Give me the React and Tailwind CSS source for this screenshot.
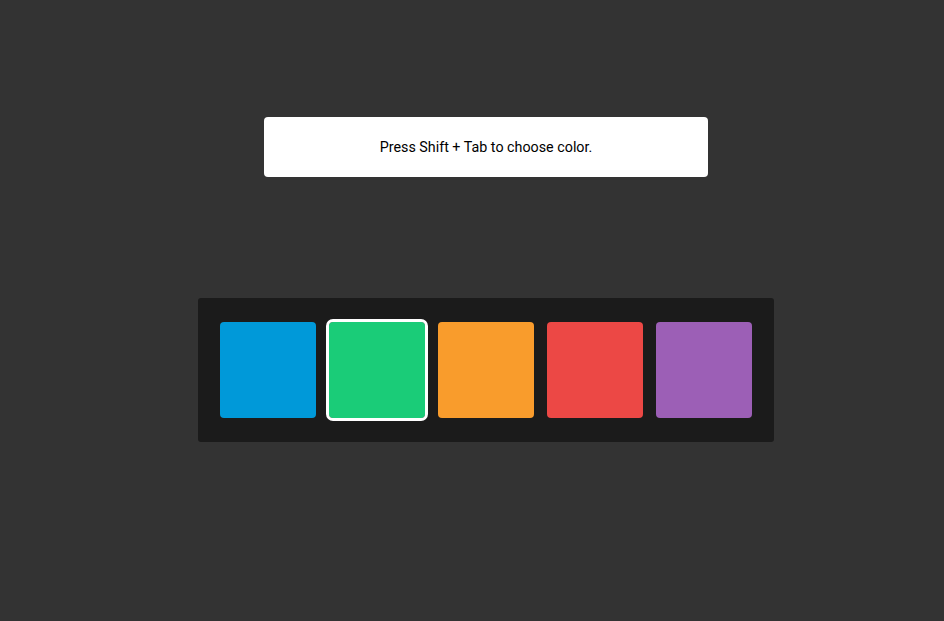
const swatches = [
  { name: 'blue', cls: 'bg-[#0099d9]' },
  { name: 'green', cls: 'bg-[#1acc78] outline-[3px] outline-solid outline-white', selected: true },
  { name: 'orange', cls: 'bg-[#f99c2c]' },
  { name: 'red', cls: 'bg-[#ec4845]' },
  { name: 'purple', cls: 'bg-[#9c5fb6]' },
];

export default function App() {
  return (
    <div
      className="min-h-[621px] bg-[#333333] flex flex-col items-center pt-[117px] pl-[28px]"
      style={{ fontFamily: 'Roboto, "Liberation Sans", sans-serif' }}
    >
      <div className="w-[444px] h-[60px] pt-[2px] bg-white rounded-[4px] flex items-center justify-center text-[14.3px] text-black">
        Press Shift + Tab to choose color.
      </div>

      <div className="mt-[121px] w-[576px] bg-[#1b1b1b] rounded-[3px] flex gap-[13px] pl-[22px] pt-[24px] pb-[24px]">
        {swatches.map((s) => (
          <button
            key={s.name}
            aria-label={s.name}
            className={`w-[96px] h-[96px] rounded-[4px] ${s.cls}`}
          />
        ))}
      </div>
    </div>
  );
}
